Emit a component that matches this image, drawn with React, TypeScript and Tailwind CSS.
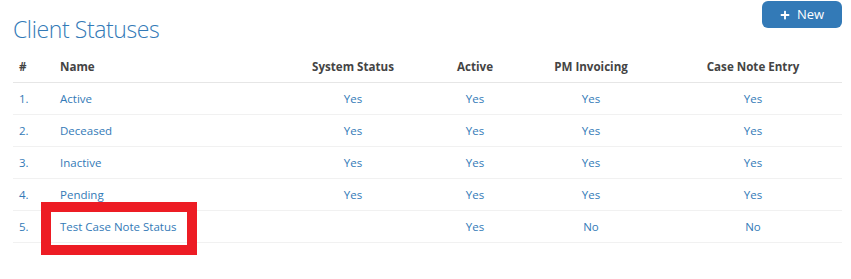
import React from "react";
import { FaPlus } from "react-icons/fa";

const rows = [
  { n: "1.", name: "Active", sys: "Yes", act: "Yes", pm: "Yes", cn: "Yes" },
  { n: "2.", name: "Deceased", sys: "Yes", act: "Yes", pm: "Yes", cn: "Yes" },
  { n: "3.", name: "Inactive", sys: "Yes", act: "Yes", pm: "Yes", cn: "Yes" },
  { n: "4.", name: "Pending", sys: "Yes", act: "Yes", pm: "Yes", cn: "Yes" },
  { n: "5.", name: "Test Case Note Status", sys: "", act: "Yes", pm: "No", cn: "No" },
];

const grid = "grid grid-cols-[42px_238px_120px_124px_127px_178px]";

export default function App() {
  return (
    <div
      className="relative w-[851px] h-[279px] bg-white overflow-hidden"
      style={{ fontFamily: '"Open Sans", "Liberation Sans", sans-serif' }}
    >
      <div className="pl-[13px] pr-[9px]">
        <div className="flex justify-between items-start">
          <h1 className="pt-[14px] text-[23px] leading-[31px] tracking-[-0.4px] font-light text-[#337ab7]">
            Client Statuses
          </h1>
          <button className="mt-[1px] w-[80px] h-[27px] rounded-[6px] bg-[#337ab7] text-white text-[13px] flex items-center justify-center gap-[7px]">
            <FaPlus className="w-[10px] h-[10px]" />
            <span>New</span>
          </button>
        </div>
        <div className="mt-[6px] w-[829px]">
          <div className={`${grid} h-[32px] items-center border-b border-[#e6e6e6] text-[11.6px] font-bold text-[#444]`}>
            <div className="pl-[6px]">#</div>
            <div className="pl-[5px]">Name</div>
            <div className="text-center">System Status</div>
            <div className="text-center">Active</div>
            <div className="text-center pr-[19px]">PM Invoicing</div>
            <div className="text-center">Case Note Entry</div>
          </div>
          {rows.map((r) => (
            <div
              key={r.n}
              className={`${grid} h-[32px] items-center border-b border-[#f1f1f1] text-[11.5px] text-[#337ab7]`}
            >
              <div className="pl-[6px]">{r.n}</div>
              <div className="pl-[5px]">{r.name}</div>
              <div className="text-center">{r.sys}</div>
              <div className="text-center">{r.act}</div>
              <div className="text-center pr-[19px]">{r.pm}</div>
              <div className="text-center">{r.cn}</div>
            </div>
          ))}
        </div>
      </div>
      <div className="absolute left-[41px] top-[202px] w-[156px] h-[53px] border-[10px] border-[#ed1c24]" />
    </div>
  );
}
